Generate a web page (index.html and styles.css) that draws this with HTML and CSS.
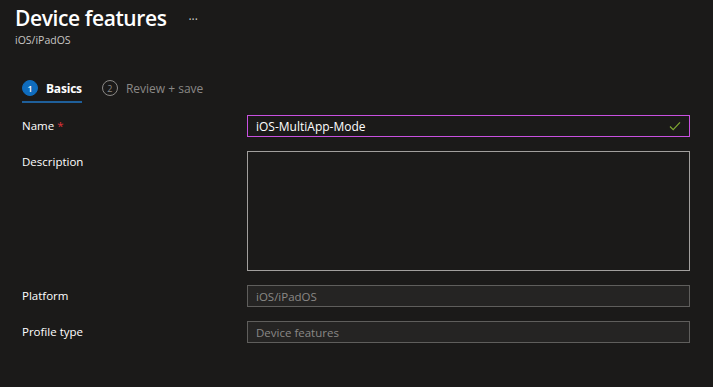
FILE: index.html
```html
<!DOCTYPE html>
<html lang="en">
<head>
  <meta charset="UTF-8"/>
  <title>Device features</title>
  <link rel="stylesheet" href="styles.css">
</head>
<body>
  <div class="header">
    <div class="title-row">
      <h1>Device features</h1>
      <span class="more">&middot;&middot;&middot;</span>
    </div>
    <div class="subtitle">iOS/iPadOS</div>
  </div>

  <div class="steps">
    <div class="step active"><span class="num">1</span><span class="label">Basics</span></div>
    <div class="step"><span class="num">2</span><span class="label">Review + save</span></div>
  </div>

  <div class="form">
    <div class="row">
      <label>Name <span class="req">*</span></label>
      <div class="field name-field">
        <span>iOS-MultiApp-Mode</span>
        <svg width="12" height="10" viewBox="0 0 12 10"><path d="M1 5.5 L4.2 8.6 L11 1.4" fill="none" stroke="#7fa832" stroke-width="1.2"/></svg>
      </div>
    </div>
    <div class="row">
      <label>Description</label>
      <div class="field textarea"></div>
    </div>
    <div class="row">
      <label>Platform</label>
      <div class="field disabled">iOS/iPadOS</div>
    </div>
    <div class="row">
      <label>Profile type</label>
      <div class="field disabled">Device features</div>
    </div>
  </div>
</body>
</html>
```

FILE: styles.css
```css
body { margin:0; background:#1b1a19; color:#fff; font-family:"Open Sans", "Noto Sans", sans-serif; font-size:12px; }
.header { padding:2px 15px 0; }
.title-row { display:flex; align-items:center; height:32px; }
h1 { margin:0; font-size:21px; font-weight:600; letter-spacing:-0.4px; }
.more { margin-left:22px; font-size:12px; color:#ccc; margin-top:2px; }
.subtitle { font-size:10.5px; color:#c8c6c4; margin-top:-1px; }

.steps { display:flex; gap:20px; margin:28px 0 0 22px; }
.step { display:flex; align-items:center; gap:8px; height:26px; color:#8a8886; font-size:12px; }
.step .num { width:14px; height:14px; border-radius:50%; border:1px solid #8a8886; display:flex; align-items:center; justify-content:center; font-size:9px; }
.step.active { color:#fff; font-weight:700; border-bottom:2px solid #1f5f9a; letter-spacing:-0.2px; }
.step.active .num { background:#0f6cbd; border-color:#0f6cbd; color:#fff; font-weight:600; }

.form { margin-top:12px; padding:0 23px 0 22px; }
.row { display:flex; align-items:flex-start; margin-bottom:14px; }
.row label { width:225px; line-height:22px; font-size:11.5px; }
.req { color:#e0333a; }
.field { flex:1; box-sizing:border-box; height:22px; border:1px solid #a19f9d; display:flex; align-items:center; padding:0 8px; font-size:12px; }
.name-field { border-color:#c850e0; justify-content:space-between; }
.textarea { height:120px; }
.disabled { background:#252423; border-color:#5f5e5c; color:#8a8886; font-size:11.5px; }
```
